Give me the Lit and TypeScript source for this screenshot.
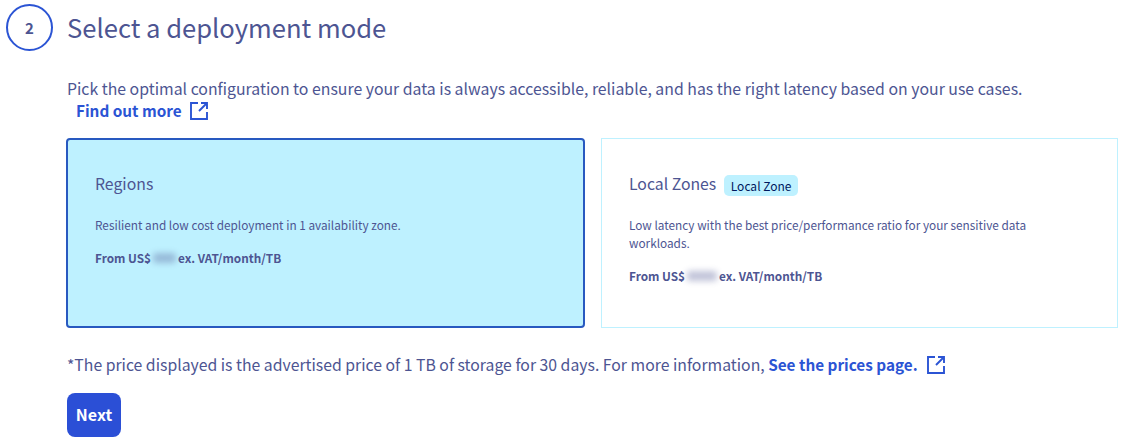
import { LitElement, html, css, svg } from "lit";
import { customElement } from "lit/decorators.js";

const extIcon = svg`<path d="M8 1H1v16h16v-7M11 1h6v6M17 1L9 9" fill="none" stroke="currentColor" stroke-width="1.9"/>`;

@customElement("app-root")
export class AppRoot extends LitElement {
  static styles = css`
    :host {
      display: block;
      width: 1128px;
      height: 443px;
      box-sizing: border-box;
      overflow: hidden;
      background: #fff;
      color: #4d5592;
      font-family: "Noto Sans CJK SC", "Noto Sans", sans-serif;
      font-size: 16px;
      padding: 4px 10px 0 6px;
    }
    .head { display: flex; align-items: center; gap: 14px; height: 47px; }
    .step {
      width: 47px; height: 47px; box-sizing: border-box;
      border: 2px solid #2b54d4; border-radius: 50%;
      display: flex; align-items: center; justify-content: center;
      font-size: 15px; font-weight: 700;
    }
    h2 { margin: 0; font-size: 25.6px; font-weight: 400; line-height: 47px; position: relative; top: -1px; }
    .body { margin: 26px 0 0 60px; }
    p { margin: 0; }
    .intro { line-height: 24px; font-size: 15.83px; margin-left: 1px; }
    a { color: #2b54d4; font-weight: 700; text-decoration: none; font-size: 15.3px; }
    a svg { width: 18px; height: 18px; vertical-align: -3px; }
    .more { display: block; margin-left: 10px; line-height: 19px; }
    .more svg { margin-left: 5px; }
    .cards { display: flex; gap: 16px; margin-top: 18px; }
    .card {
      flex: 1 1 0; height: 190px; box-sizing: border-box;
      border: 1px solid #bef1ff; padding: 33px 27px;
    }
    .sel { border: 2px solid #2859c0; border-radius: 4px; background: #bef1ff; padding-top: 32px; }
    .title { display: flex; align-items: center; gap: 8px; font-size: 15.8px; line-height: 24px; height: 24px; }
    .badge {
      background: #bef1ff; color: #00185e; font-size: 12px; line-height: 21px;
      border-radius: 5px; padding: 0 6.5px; margin-top: 2px;
    }
    .desc { font-size: 11.8px; line-height: 18px; margin-top: 20px; max-width: 420px; }
    .price { font-size: 11.8px; line-height: 18px; margin-top: 15px; font-weight: 700; display: flex; }
    .blur { width: 23px; height: 10px; margin: 4px 1px 0 2px; border-radius: 3px; background: #4d5592; opacity: .35; filter: blur(3px); }
    .wide { width: 30px; }
    .after { margin-left: 1px; }
    .note { margin-top: 24px; line-height: 24px; white-space: nowrap; font-size: 15.79px; margin-left: 1px; }
    .note a svg { margin-left: 6px; }
    button {
      display: block; margin: 16px 0 0 1px; width: 54px; height: 44px; padding: 0 0 2px;
      border: 0; border-radius: 8px; background: #2b4fd6; color: #fff;
      font: 700 16px "Noto Sans CJK SC", "Noto Sans", sans-serif;
    }
  `;

  render() {
    return html`
      <div class="head"><div class="step">2</div><h2>Select a deployment mode</h2></div>
      <div class="body">
        <p class="intro">Pick the optimal configuration to ensure your data is always accessible, reliable, and has the right latency based on your use cases.</p>
        <a class="more" href="#">Find out more <svg viewBox="0 0 18 18">${extIcon}</svg></a>
        <div class="cards">
          <div class="card sel">
            <div class="title">Regions</div>
            <p class="desc">Resilient and low cost deployment in 1 availability zone.</p>
            <div class="price">From US$<span class="blur"></span><span class="after">ex. VAT/month/TB</span></div>
          </div>
          <div class="card">
            <div class="title">Local Zones <span class="badge">Local Zone</span></div>
            <p class="desc">Low latency with the best price/performance ratio for your sensitive data workloads.</p>
            <div class="price">From US$<span class="blur wide"></span><span class="after">ex. VAT/month/TB</span></div>
          </div>
        </div>
        <p class="note">*The price displayed is the advertised price of 1 TB of storage for 30 days. For more information, <a href="#">See the prices page. <svg viewBox="0 0 18 18">${extIcon}</svg></a></p>
        <button>Next</button>
      </div>
    `;
  }
}
